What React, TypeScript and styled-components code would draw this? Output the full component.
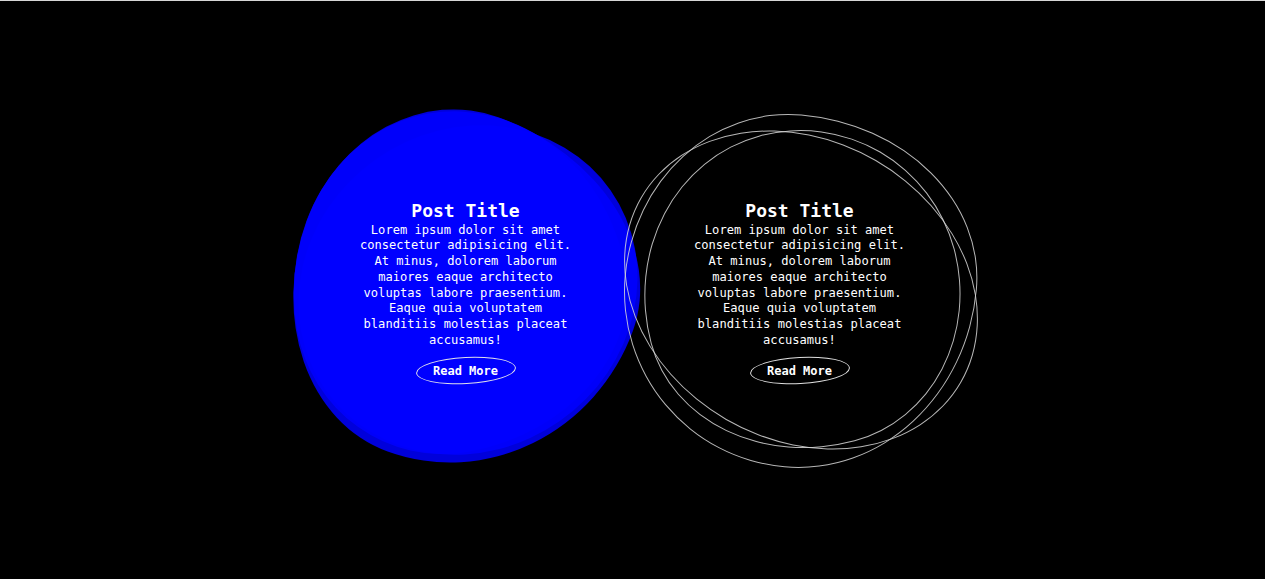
import React from "react";
import styled, { createGlobalStyle, css } from "styled-components";

const Global = createGlobalStyle`
  html, body { margin: 0; padding: 0; background: #000; }
  body { border-top: 1px solid #d6d6d6; }
  #root { min-height: 578px; }
`;

const Page = styled.main`
  height: 578px;
  display: flex;
  align-items: center;
  justify-content: center;
  gap: 34px;
  font-family: "DejaVu Sans Mono", "Liberation Mono", monospace;
  color: #fff;
`;

const Card = styled.article`
  position: relative;
  width: 300px;
  height: 300px;
  display: flex;
  flex-direction: column;
  align-items: center;
  justify-content: center;
`;

type BlobProps = { $filled?: boolean; $radius: string; $rot: number; $inset: string };

const Blob = styled.span<BlobProps>`
  position: absolute;
  inset: ${(p) => p.$inset};
  border-radius: ${(p) => p.$radius};
  transform: rotate(${(p) => p.$rot}deg);
  ${(p) =>
    p.$filled
      ? css`
          background: rgba(0, 0, 255, 0.86);
        `
      : css`
          border: 1px solid rgba(215, 215, 215, 0.85);
        `}
`;

const Content = styled.div`
  position: relative;
  z-index: 1;
  display: flex;
  flex-direction: column;
  align-items: center;
  text-align: center;
  margin-top: 2px;
`;

const Title = styled.h2`
  margin: 0;
  font-size: 18px;
  line-height: 25px;
  font-weight: 700;
`;

const Body = styled.p`
  margin: 0;
  width: 220px;
  font-size: 12.1px;
  line-height: 15.7px;
`;

const Button = styled.a`
  position: relative;
  margin-top: 9px;
  width: 100px;
  height: 27px;
  display: flex;
  align-items: center;
  justify-content: center;
  font-size: 12px;
  font-weight: 700;
  color: #fff;
  text-decoration: none;
  &::before {
    content: "";
    position: absolute;
    inset: 0;
    border: 1px solid rgba(235, 235, 235, 0.95);
    border-radius: 50%;
    transform: rotate(-3deg);
  }
`;

type BlobDef = { r: string; rot: number; inset: string };

const outlineBlobs: BlobDef[] = [
  { r: "46% 54% 50% 50% / 50% 45% 55% 50%", rot: 5, inset: "-25px -26px -28px -26px" },
  { r: "50%", rot: 30, inset: "0px -36px 0px -34px" },
  { r: "50% 50% 46% 54% / 54% 50% 50% 46%", rot: -15, inset: "-10px -10px -10px -8px" },
];

const filledBlobs: BlobDef[] = [
  { r: "42% 58% 55% 45% / 46% 44% 56% 54%", rot: 20, inset: "-24px -20px -28px -24px" },
  { r: "50%", rot: -35, inset: "-10px -26px -10px -22px" },
  { r: "55% 45% 44% 56% / 50% 56% 44% 50%", rot: 80, inset: "-26px -12px -8px -28px" },
];

const text =
  "Lorem ipsum dolor sit amet consectetur adipisicing elit. At minus, dolorem laborum maiores eaque architecto voluptas labore praesentium. Eaque quia voluptatem blanditiis molestias placeat accusamus!";

function PostCard({ filled }: { filled?: boolean }) {
  const blobs = filled ? filledBlobs : outlineBlobs;
  return (
    <Card>
      {blobs.map((b, i) => (
        <Blob key={i} $filled={filled} $radius={b.r} $rot={b.rot} $inset={b.inset} />
      ))}
      <Content>
        <Title>Post Title</Title>
        <Body>{text}</Body>
        <Button href="#">Read More</Button>
      </Content>
    </Card>
  );
}

export default function App() {
  return (
    <>
      <Global />
      <Page>
        <PostCard filled />
        <PostCard />
      </Page>
    </>
  );
}
